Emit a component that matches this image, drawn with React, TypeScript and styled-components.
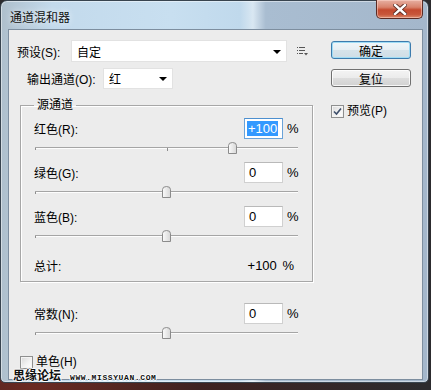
import React from 'react';
import styled, { createGlobalStyle } from 'styled-components';

const GlobalStyle = createGlobalStyle`
  html, body {
    margin: 0;
    padding: 0;
  }
  body {
    width: 431px;
    height: 390px;
    overflow: hidden;
    background: radial-gradient(circle at 8% 100%, #6b2a22 0%, #3d2221 30%, #2c2b2e 70%);
    font-family: 'Liberation Sans', 'Noto Sans CJK SC', sans-serif;
    font-size: 12px;
    color: #000;
  }
`;

const Window = styled.div`
  position: relative;
  width: 429px;
  height: 383px;
  box-sizing: border-box;
  display: flex;
  flex-direction: column;
  border: 1px solid #38444f;
  border-radius: 7px 7px 5px 5px;
  padding: 0 5px 2px 7px;
  background: linear-gradient(
    90deg,
    #aebfcc 0%,
    #c3daec 12%,
    #c8dff0 40%,
    #c0d9ec 56%,
    #d9e7f2 59%,
    #a9bdd1 62%,
    #a4b7cb 100%
  );
  box-shadow: inset 0 0 0 1px rgba(255, 255, 255, 0.45);
`;

const TitleBar = styled.div`
  height: 28px;
  display: flex;
  justify-content: space-between;
  align-items: flex-start;
`;

const Title = styled.span`
  padding: 7px 0 0 2px;
  font-size: 12px;
  color: #111;
  text-shadow: 0 0 6px rgba(255, 255, 255, 0.9);
`;

const CloseButton = styled.div`
  width: 47px;
  height: 19px;
  margin-top: -1px;
  box-sizing: border-box;
  border: 1px solid #5a2b24;
  border-top: none;
  border-radius: 0 0 5px 5px;
  background: linear-gradient(#e7b0a2 0%, #d8826c 40%, #c44a2f 55%, #c8563a 80%, #dc8a6c 100%);
  box-shadow: inset 0 0 0 1px rgba(255, 220, 210, 0.5);
  display: flex;
  align-items: center;
  justify-content: center;
`;

const Client = styled.div`
  flex: 1;
  display: flex;
  background: #ececec;
  border: 1px solid #7d8e9f;
`;

const MainColumn = styled.div`
  width: 322px;
  display: flex;
  flex-direction: column;
`;

const SideColumn = styled.div`
  width: 80px;
  padding-top: 11px;
  display: flex;
  flex-direction: column;
`;

const FormRow = styled.div<{ $indent: number; $top: number }>`
  display: flex;
  align-items: center;
  margin-top: ${(p) => p.$top}px;
  padding-left: ${(p) => p.$indent}px;
`;

const RowLabel = styled.span<{ $width: number }>`
  width: ${(p) => p.$width}px;
  white-space: nowrap;
`;

const SelectBox = styled.div<{ $width: number; $height: number }>`
  width: ${(p) => p.$width}px;
  height: ${(p) => p.$height}px;
  box-sizing: border-box;
  display: flex;
  align-items: center;
  justify-content: space-between;
  padding: 0 5px 0 5px;
  background: #fff;
  border: 1px solid #e2e2e2;
`;

const Arrow = styled.span`
  width: 0;
  height: 0;
  border-left: 4px solid transparent;
  border-right: 4px solid transparent;
  border-top: 4px solid #000;
  margin-top: 1px;
`;

const MenuIcon = styled.span`
  display: inline-flex;
  margin-left: 10px;
`;

const GroupBox = styled.fieldset`
  margin: 8px 0 0 11px;
  width: 293px;
  box-sizing: border-box;
  padding: 0 14px 5px 13px;
  border: 1px solid #a7a7a7;
  box-shadow: 1px 1px 0 #fff, inset 1px 1px 0 #fff;
  min-width: 0;
`;

const Legend = styled.legend`
  padding: 0 3px;
  line-height: 16px;
  font-size: 12px;
`;

const FieldRow = styled.div<{ $top?: number }>`
  display: flex;
  align-items: center;
  height: 21px;
  margin-top: ${(p) => p.$top ?? 0}px;
`;

const FieldLabel = styled.span`
  flex: 1;
`;

const NumberBox = styled.div<{ $focused?: boolean }>`
  width: 39px;
  height: 21px;
  box-sizing: border-box;
  display: flex;
  align-items: center;
  padding-left: 4px;
  font-size: 13px;
  background: #fff;
  border: 1px solid ${(p) => (p.$focused ? '#6aa3d8' : '#d0d0d0')};
  border-top-color: ${(p) => (p.$focused ? '#4d8fcf' : '#b9b9b9')};
`;

const Selected = styled.span`
  background: #3399ff;
  color: #fff;
  line-height: 15px;
  padding: 0 1px;
  margin-left: -2px;
`;

const Percent = styled.span`
  width: 11px;
  margin-left: 4px;
  font-size: 13px;
`;

const SliderArea = styled.div`
  position: relative;
  height: 23px;
  margin-left: 1px;
  padding-top: 8px;
  box-sizing: border-box;
`;

const SliderLine = styled.div`
  height: 1px;
  background: #a5a5a5;
  border-bottom: 1px solid #fdfdfd;
`;

const Tick = styled.span<{ $at: string; $size: number }>`
  position: absolute;
  top: 9px;
  left: ${(p) => p.$at};
  width: 1px;
  height: ${(p) => p.$size}px;
  background: #8d8d8d;
`;

const Thumb = styled.svg`
  position: absolute;
  top: 3px;
`;

const TotalValue = styled.span`
  margin-right: 4px;
  font-size: 13px;
  word-spacing: 2px;
`;

const PlainField = styled.div`
  margin: 21px 33px 0 25px;
`;

const CheckRow = styled.label<{ $indent: number; $top: number }>`
  display: flex;
  align-items: center;
  gap: 3px;
  margin-top: ${(p) => p.$top}px;
  padding-left: ${(p) => p.$indent}px;
  font-size: 12px;
  line-height: 14px;
`;

const CheckBox = styled.span`
  width: 13px;
  height: 13px;
  box-sizing: border-box;
  border: 1px solid #8e8f8f;
  background: linear-gradient(135deg, #d8d8d8 0%, #f4f4f4 60%, #ffffff 100%);
  box-shadow: inset 0 0 0 1px #f4f4f4;
  display: inline-flex;
  align-items: center;
  justify-content: center;
`;

const DialogButton = styled.div<{ $primary?: boolean }>`
  width: 80px;
  height: 18px;
  box-sizing: border-box;
  display: flex;
  align-items: center;
  justify-content: center;
  border-radius: 3px;
  margin-bottom: 10px;
  border: 1px solid ${(p) => (p.$primary ? '#3d7bad' : '#707070')};
  background: ${(p) =>
    p.$primary
      ? 'linear-gradient(#f1f6f9 0%, #e6eef3 50%, #d6e3ea 51%, #cfdde6 100%)'
      : 'linear-gradient(#f4f4f4 0%, #ebebeb 50%, #dddddd 51%, #d1d1d1 100%)'};
  box-shadow: inset 0 0 0 1px ${(p) => (p.$primary ? '#9fdcf5' : 'rgba(255,255,255,0.8)')};
`;

const Watermark = styled.div`
  position: absolute;
  left: 12px;
  bottom: -1px;
  display: flex;
  align-items: baseline;
  gap: 9px;
  pointer-events: none;
`;

const WatermarkCn = styled.span`
  font-size: 12px;
  font-weight: bold;
  color: #111;
  text-shadow: 1px 0 0 #fff, -1px 0 0 #fff, 0 1px 0 #fff, 0 -1px 0 #fff;
`;

const WatermarkUrl = styled.span`
  font-family: 'Liberation Mono', monospace;
  font-size: 8px;
  font-weight: bold;
  letter-spacing: 0.6px;
  color: #111;
  text-shadow: 1px 0 0 #fff, -1px 0 0 #fff, 0 1px 0 #fff, 0 -1px 0 #fff;
`;

interface SliderFieldProps {
  label: string;
  value: number;
  focused?: boolean;
  top?: number;
}

const SliderField: React.FC<SliderFieldProps> = ({ label, value, focused, top }) => {
  const frac = (value + 200) / 400;
  const text = value > 0 ? `+${value}` : `${value}`;
  return (
    <>
      <FieldRow $top={top}>
        <FieldLabel>{label}</FieldLabel>
        <NumberBox $focused={focused}>{focused ? <Selected>{text}</Selected> : text}</NumberBox>
        <Percent>%</Percent>
      </FieldRow>
      <SliderArea>
        <SliderLine />
        <Tick $at="0" $size={2} />
        <Tick $at="50%" $size={3} />
        <Thumb width="9" height="12" viewBox="0 0 9 12" style={{ left: `calc(${frac * 100}% - 4.5px)` }}>
          <defs>
            <linearGradient id="thumbFill" x1="0" y1="0" x2="1" y2="0">
              <stop offset="0" stopColor="#fbfbfb" />
              <stop offset="1" stopColor="#d7d7d7" />
            </linearGradient>
          </defs>
          <path d="M0.5 11.5 V3.5 Q0.5 0.5 4.5 0.5 Q8.5 0.5 8.5 3.5 V11.5 Z" fill="url(#thumbFill)" stroke="#8b8b8b" />
        </Thumb>
      </SliderArea>
    </>
  );
};

const App: React.FC = () => {
  return (
    <>
      <GlobalStyle />
      <Window>
        <TitleBar>
          <Title>通道混和器</Title>
          <CloseButton>
            <svg width="14" height="11" viewBox="0 0 14 11">
              <path d="M2 1 L12 10 M12 1 L2 10" stroke="#5a2a22" strokeWidth="4.2" strokeLinecap="square" />
              <path d="M2 1 L12 10 M12 1 L2 10" stroke="#ffffff" strokeWidth="2.4" strokeLinecap="square" />
            </svg>
          </CloseButton>
        </TitleBar>

        <Client>
          <MainColumn>
            <FormRow $indent={8} $top={10}>
              <RowLabel $width={54}>预设(S):</RowLabel>
              <SelectBox $width={216} $height={22}>
                <span>自定</span>
                <Arrow />
              </SelectBox>
              <MenuIcon>
                <svg width="12" height="10" viewBox="0 0 12 10">
                  <rect x="0" y="1" width="1" height="1" fill="#555" />
                  <rect x="2" y="1" width="6" height="1" fill="#555" />
                  <rect x="0" y="4" width="1" height="1" fill="#555" />
                  <rect x="2" y="4" width="6" height="1" fill="#555" />
                  <rect x="0" y="7" width="1" height="1" fill="#555" />
                  <rect x="2" y="7" width="4" height="1" fill="#555" />
                  <path d="M7 7 H11 L9 9.5 Z" fill="#555" />
                </svg>
              </MenuIcon>
            </FormRow>

            <FormRow $indent={18} $top={6}>
              <RowLabel $width={76}>输出通道(O):</RowLabel>
              <SelectBox $width={70} $height={21}>
                <span>红</span>
                <Arrow />
              </SelectBox>
            </FormRow>

            <GroupBox>
              <Legend>源通道</Legend>
              <SliderField label="红色(R):" value={100} focused top={5} />
              <SliderField label="绿色(G):" value={0} />
              <SliderField label="蓝色(B):" value={0} />
              <FieldRow $top={5}>
                <FieldLabel>总计:</FieldLabel>
                <TotalValue>+100 %</TotalValue>
              </FieldRow>
            </GroupBox>

            <PlainField>
              <SliderField label="常数(N):" value={0} />
            </PlainField>

            <CheckRow $indent={11} $top={8}>
              <CheckBox />
              <span>单色(H)</span>
            </CheckRow>
          </MainColumn>

          <SideColumn>
            <DialogButton $primary>确定</DialogButton>
            <DialogButton>复位</DialogButton>
            <CheckRow $indent={0} $top={7}>
              <CheckBox>
                <svg width="9" height="9" viewBox="0 0 9 9">
                  <path d="M1 4.5 L3.5 7 L8 1.5" stroke="#3e4f6b" strokeWidth="1.6" fill="none" />
                </svg>
              </CheckBox>
              <span>预览(P)</span>
            </CheckRow>
          </SideColumn>
        </Client>

        <Watermark>
          <WatermarkCn>思缘论坛</WatermarkCn>
          <WatermarkUrl>WWW.MISSYUAN.COM</WatermarkUrl>
        </Watermark>
      </Window>
    </>
  );
};

export default App;
